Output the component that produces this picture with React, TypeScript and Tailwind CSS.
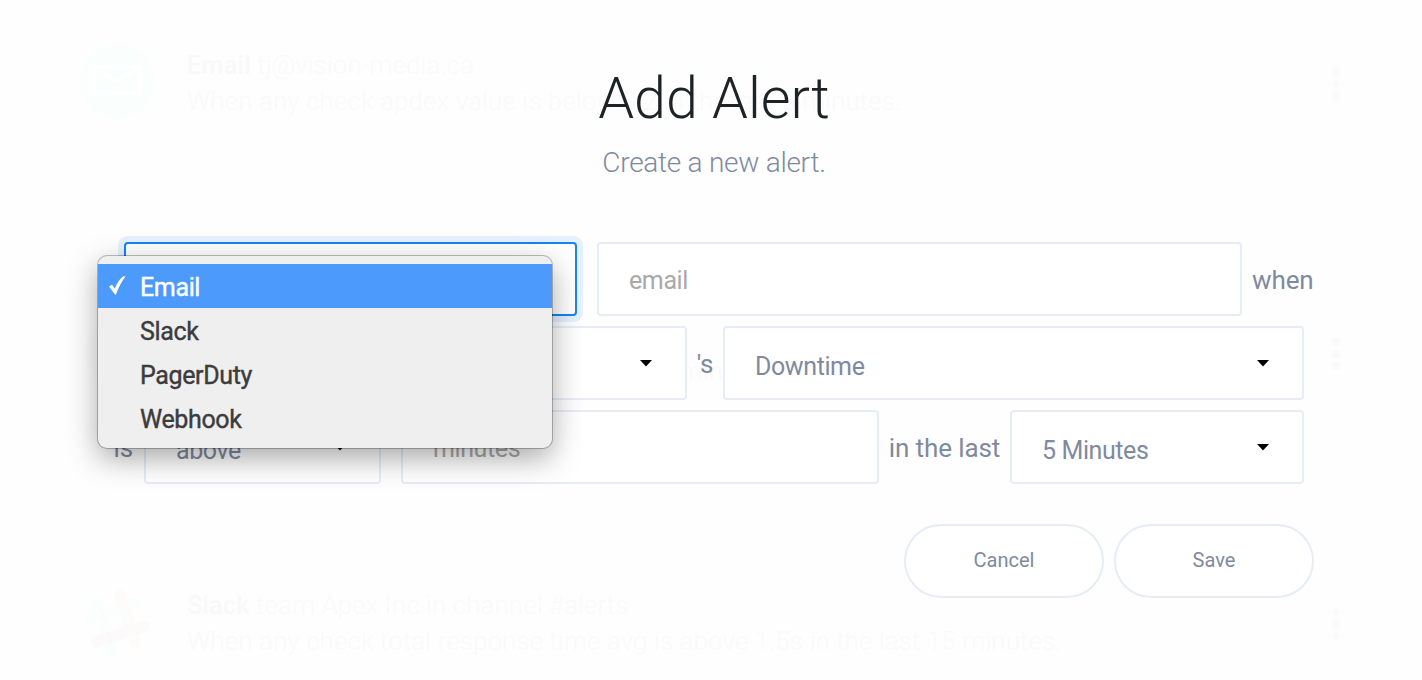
import type { ReactNode } from "react";

function Dots() {
  return (
    <div className="flex w-2 flex-col gap-1">
      <span className="size-2 rounded-full bg-[#fafafa]" />
      <span className="size-2 rounded-full bg-[#fafafa]" />
      <span className="size-2 rounded-full bg-[#fafafa]" />
    </div>
  );
}

function MailIcon() {
  return (
    <svg className="size-[76px]" viewBox="0 0 76 76" fill="none">
      <circle cx="38" cy="38" r="37.500" fill="#fafffd" />
      <path d="M15.500 24h45v26.500h-45z" stroke="#fff" strokeWidth="3" />
      <path d="M16 25l22 13 22-13" stroke="#fff" strokeWidth="3" />
    </svg>
  );
}

function PagerIcon() {
  return (
    <svg className="size-[76px]" viewBox="0 0 76 76">
      <circle cx="38" cy="41" r="32" fill="#fdfdfd" />
    </svg>
  );
}

function SlackIcon() {
  return (
    <svg className="size-[76px]" viewBox="0 0 76 76" fill="none" strokeWidth="11.500" strokeLinecap="round">
      <path d="M10.500 34.500L56.500 19.500" stroke="#fafefd" />
      <path d="M18.500 19L33 66.500" stroke="#fafefc" />
      <path d="M41.500 11.500L56.500 59" stroke="#fefcfa" />
      <path d="M17.500 59L65 43.500" stroke="#fdfafb" />
      <path d="M21.500 30.500l3-1" stroke="#f9fcfb" strokeLinecap="butt" />
      <path d="M28.500 55.500l4-1.300" stroke="#faf9f9" strokeLinecap="butt" />
    </svg>
  );
}

function AlertRow({ icon, name, target, rule }: { icon: ReactNode; name?: string; target?: string; rule: string }) {
  return (
    <div className="flex h-[270px] items-start pt-[43px] pr-[82px] pl-[79px]">
      {icon}
      <div className="ml-8 flex-1 pt-1 text-[26px] leading-9 font-light tracking-[0.06px] whitespace-nowrap text-[#fafafa]">
        <div className="h-9">
          <span className="text-[25.500px] font-medium text-[#f9f9f9]">{name}</span> {target}
        </div>
        <div>{rule}</div>
      </div>
      <div className="pt-[25px]">
        <Dots />
      </div>
    </div>
  );
}

function Caret() {
  return (
    <svg className="mt-px h-[7px] w-3" viewBox="0 0 12 7">
      <path d="M0 0h12L6 6.500z" fill="#000" />
    </svg>
  );
}

const field =
  "flex h-[74px] shrink-0 items-center justify-between rounded-[4px] border-2 bg-white pl-[30px] pr-[33px] text-[25px] tracking-[-0.4px]";

function Select({ width, children }: { width: string; children: ReactNode }) {
  return (
    <div className={`${field} border-[#e6edf6] ${width}`}>
      <span className="pt-[7px]">{children}</span>
      <Caret />
    </div>
  );
}

function Input({ width, placeholder }: { width: string; placeholder: string }) {
  return (
    <div className={`${field} border-[#e6edf6] text-[#a9a9a9] ${width}`}>
      <span className="pt-[3px]">{placeholder}</span>
    </div>
  );
}

function MenuItem({ children, checked }: { children: ReactNode; checked?: boolean }) {
  return (
    <div className={`flex h-11 items-center ${checked ? "bg-[#4c9afb] text-white" : "text-[#3c3c3c]"}`}>
      <span className="flex w-[42px] pl-[11px]">
        {checked && (
          <svg className="-mt-0.5 h-[19px] w-[17px]" viewBox="0 0 17 19">
            <path d="M0 10.500L3 8.800L5.800 12.500C8 7.500 10.500 3 14 0.500H16.500C12.500 5.500 9.500 11.500 7 18.500H6z" fill="#fff" />
          </svg>
        )}
      </span>
      <span className="pt-1">{children}</span>
    </div>
  );
}

export default function App() {
  return (
    <div className="relative h-[680px] w-[1422px] overflow-hidden bg-[#fefefe] font-['Roboto',sans-serif]">
      <div className="flex flex-col">
        <AlertRow icon={<MailIcon />} name="Email" target="tj@vision-media.ca" rule="When any check apdex value is below 0.2 in the last 5 minutes." />
        <AlertRow icon={<PagerIcon />} rule="When any check total downtime is above 5 minutes." />
        <AlertRow icon={<SlackIcon />} name="Slack" target="team Apex Inc in channel #alerts" rule="When any check total response time avg is above 1.5s in the last 15 minutes." />
      </div>

      <div className="absolute inset-0 flex flex-col text-[#7f8a9e]">
        <h1 className="mt-16 pl-[6px] text-center text-[57.500px] leading-[70px] font-light text-[#1d2224]">Add Alert</h1>
        <p className="mt-[13px] pl-[6px] text-center text-[28px] leading-8 font-light tracking-[-0.27px]">Create a new alert.</p>

        <div className="mt-[63px] flex flex-col gap-2.5 text-[26px] tracking-[-0.1px]">
          <div className="flex h-[74px] items-center pl-[124px]">
            <div className={`${field} w-[453px] border-[#1683fb] shadow-[0_0_0_6px_#e5f1fe]`} />
            <div className="ml-5 flex items-center gap-2.5">
              <Input width="w-[645px]" placeholder="email" />
              <span className="pt-[3px]">when</span>
            </div>
          </div>
          <div className="flex h-[74px] items-center pl-[170px]">
            <Select width="w-[517px]">any check</Select>
            <span className="w-9 pt-[3px] text-center">'s</span>
            <Select width="w-[581px]">Downtime</Select>
          </div>
          <div className="flex h-[74px] items-center">
            <span className="w-[144px] pt-[3px] pr-[11px] text-right">is</span>
            <Select width="w-[237px]">above</Select>
            <div className="ml-5 flex">
              <Input width="w-[478px]" placeholder="minutes" />
            </div>
            <span className="w-[131px] pt-[3px] text-center">in the last</span>
            <Select width="w-[294px]">5 Minutes</Select>
          </div>
        </div>

        <div className="mt-10 flex justify-end gap-2.5 pr-[108px] text-[20px]">
          <button className="h-[74px] w-[200px] rounded-full border-2 border-[#e6edf6] bg-white pb-0.5">Cancel</button>
          <button className="h-[74px] w-[200px] rounded-full border-2 border-[#e6edf6] bg-white pb-0.5">Save</button>
        </div>
      </div>

      <div className="absolute top-[256px] left-[98px] h-48 w-[454px] rounded-[9px] bg-[#efefef] pt-2 text-[25px] tracking-[-0.36px] [-webkit-text-stroke:0.4px_currentColor] shadow-[0_0_0_1px_rgba(0,0,0,0.25),0_10px_30px_rgba(0,0,0,0.35)]">
        <MenuItem checked>Email</MenuItem>
        <MenuItem>Slack</MenuItem>
        <MenuItem>PagerDuty</MenuItem>
        <MenuItem>Webhook</MenuItem>
      </div>
    </div>
  );
}
